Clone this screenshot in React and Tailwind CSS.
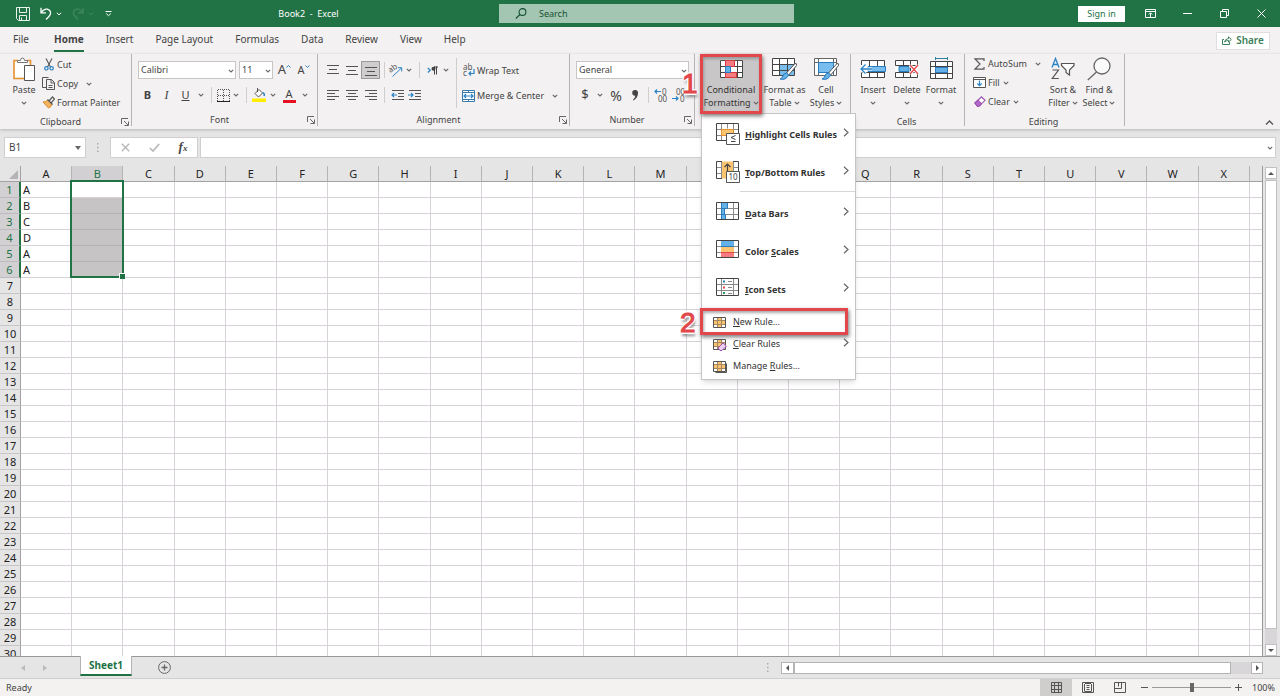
import { Fragment } from "react";

const tabs = ["File", "Home", "Insert", "Page Layout", "Formulas", "Data", "Review", "View", "Help"];
const columns = "ABCDEFGHIJKLMNOPQRSTUVWX".split("");
const rows = Array.from({ length: 30 }, (_, i) => i + 1);
const values = ["A", "B", "C", "D", "A", "A"];

function Chevron({ className = "" }) {
  return (
    <svg className={`h-[4px] w-[6px] shrink-0 text-[#666] ${className}`} viewBox="0 0 6 4" fill="none" stroke="currentColor" strokeWidth="1.1">
      <path d="M.8 .8 3 2.9 5.2 .8" />
    </svg>
  );
}

function ChevronButton({ label }) {
  return (
    <button aria-label={label} className="flex h-[18px] w-[12px] shrink-0 items-center justify-center">
      <Chevron />
    </button>
  );
}

function IconButton({ label, className = "w-[19px]", children }) {
  return (
    <button aria-label={label} className={`flex h-[18px] shrink-0 items-center justify-center ${className}`}>
      {children}
    </button>
  );
}

function Sep() {
  return <span className="mx-1 h-[16px] w-px shrink-0 bg-[#d0cecd]" />;
}

function Group({ label, className, launcher, children }) {
  return (
    <section aria-label={label} className={`flex h-[72px] shrink-0 flex-col border-r border-[#b5b3b4] ${className}`}>
      <div className="flex h-[60px]">{children}</div>
      <div className="mt-[2px] flex h-[12px] items-center pr-[2px]">
        <span className="flex-1 text-center leading-[12px]">{label}</span>
        {launcher && (
          <button aria-label={`${label} settings`}>
            <svg className="h-[8px] w-[8px]" viewBox="0 0 8 8" fill="none" stroke="#666">
              <path d="M.5 6V.5H7M3 3l4 4M7.5 3.5v4h-4" />
            </svg>
          </button>
        )}
      </div>
    </section>
  );
}

function BigButton({ icon, lines, className }) {
  return (
    <button className={`flex h-[60px] shrink-0 flex-col items-center pt-[3px] ${className}`}>
      <span className="mb-[2px] flex h-[24px] items-center justify-center">{icon}</span>
      {lines.map((line, i) => (
        <span key={line} className="flex h-[13px] items-center gap-[2px] whitespace-nowrap leading-[13px]">
          {line}
          {i === 1 && <Chevron />}
        </span>
      ))}
      {lines.length === 1 && (
        <span className="flex h-[13px] items-center">
          <Chevron />
        </span>
      )}
    </button>
  );
}

function SmallButton({ icon, children, chevron, wide }) {
  return (
    <button className="flex h-[19px] items-center whitespace-nowrap">
      <span className="mr-[2px] flex w-[13px] shrink-0 justify-center">{icon}</span>
      {children}
      {chevron && <Chevron className={wide ? "ml-[8px]" : "ml-[3px]"} />}
    </button>
  );
}

function RibbonSelect({ label, value, className }) {
  return (
    <div className={`relative h-[18px] shrink-0 ${className}`}>
      <select aria-label={label} defaultValue={value} className="block h-full w-full appearance-none border border-[#c8c6c4] bg-white pl-[2px] leading-[16px]">
        <option>{value}</option>
      </select>
      <Chevron className="pointer-events-none absolute right-[2px] top-[8px]" />
    </div>
  );
}

function Lines({ d }) {
  return (
    <svg className="h-[12px] w-[12px]" viewBox="0 0 12 12" stroke="#555" shapeRendering="crispEdges">
      <path d={d} />
    </svg>
  );
}

/* 23x18 grid outline shared by the table-like menu icons */
function GridIcon({ children }) {
  return (
    <svg className="h-[19px] w-[23px]" viewBox="0 0 23 19" fill="none">
      <path d="M.5 .5h22v17H.5z" fill="#fff" />
      <path d="M.5 6.5h22M.5 12.5h22M5.5 .5v17M17.5 .5v17" stroke="#8a8a8a" />
      {children}
      <path d="M.5 .5h22v17H.5z" stroke="#444" />
    </svg>
  );
}

function Brush() {
  return (
    <g>
      <path d="M24 6.5 15.5 16l2.3 2 7.7-9.500Q26 6 24 6.5z" fill="#fff" stroke="#555" />
      <path d="M15.5 16q-3 .2-3.600 3-.6 2.400-2.900 3 5.500 1.800 8.800-4z" fill="#64b1e8" stroke="#2b7cbf" />
    </g>
  );
}

function PasteIcon() {
  return (
    <svg className="h-[24px] w-[22px]" viewBox="0 0 22 24" fill="none">
      <path d="M2 4.500h15v16H2z" fill="#fff" />
      <path d="M5 3.500H1v18h10M14 3.500h3.500V9" stroke="#e8912d" strokeWidth="1.600" />
      <path d="M4.500 5.500v-2h3q0-2.500 2-2.500t2 2.500h3v2z" fill="#fff" stroke="#777" />
      <path d="M11.500 8.500h10v15h-10z" fill="#fff" stroke="#555" />
    </svg>
  );
}

function CutIcon() {
  return (
    <svg className="h-[13px] w-[10px]" viewBox="0 0 10 13" fill="none">
      <path d="M2 .5 6.500 9M8 .5 3.500 9" stroke="#555" strokeWidth="1.100" />
      <circle cx="2.400" cy="10.300" r="1.700" stroke="#2b83c6" strokeWidth="1.200" />
      <circle cx="7.600" cy="10.300" r="1.700" stroke="#2b83c6" strokeWidth="1.200" />
    </svg>
  );
}

function CopyIcon() {
  return (
    <svg className="h-[13px] w-[13px]" viewBox="0 0 13 13" fill="none" stroke="#555">
      <path d="M4 10.500H.5V.5h6M4.500 2.500h5l3 3v7h-8zM9 2.500v3.500h3.500M6.500 8.500h4M6.500 10.500h4" />
    </svg>
  );
}

function PainterIcon() {
  return (
    <svg className="h-[13px] w-[13px]" viewBox="0 0 13 13" fill="none">
      <path d="M1 6 6.500 12q3-1 3.500-4L6 4q-2 2-5 2z" fill="#f4b35e" stroke="#dd8a2a" />
      <path d="m5.500 3.500 5 5M7 5l3.500-4 2 2L9 7" fill="#fff" stroke="#555" strokeWidth="1.200" />
    </svg>
  );
}

function ConditionalIcon() {
  return (
    <svg className="h-[19px] w-[23px]" viewBox="0 0 23 19" fill="none">
      <path d="M.5 .5h22v17H.5z" fill="#fff" />
      <path d="M.5 .5h22v17H.5zM.5 6.500h22M.5 12.500h22M5.500 .5v17M17.500 .5v17" stroke="#444" />
      <path d="M5.500 .5h9v6h-9zM5.500 12.500h11v5h-11z" fill="#f47c80" stroke="#d9363b" />
      <path d="M5.500 6.500h5v6h-5z" fill="#64b1e8" stroke="#2b7cbf" />
    </svg>
  );
}

function TableStyleIcon() {
  return (
    <svg className="h-[24px] w-[27px]" viewBox="0 0 27 24" fill="none">
      <path d="M1.500 1.500h22v17h-22z" fill="#fff" />
      <path d="M9 7h14v12H9z" fill="#79bdee" />
      <path d="M1.500 1.500h22v17h-22zM1.500 7.500h22M1.500 13.500h22M8.500 1.500v17M16.500 1.500v17" stroke="#444" />
      <Brush />
    </svg>
  );
}

function CellStyleIcon() {
  return (
    <svg className="h-[24px] w-[27px]" viewBox="0 0 27 24" fill="none">
      <path d="M1.500 1.500h22v17h-22z" fill="#fff" />
      <path d="M1.500 1.500h22v17h-22zM1.500 5.500h22M5.500 1.500v17M20.500 1.500v17" stroke="#666" />
      <path d="M5.500 5.500h15v10h-15z" fill="#79bdee" stroke="#2b7cbf" />
      <Brush />
    </svg>
  );
}

function InsertIcon() {
  return (
    <svg className="h-[19px] w-[26px]" viewBox="0 0 26 19" fill="none">
      <path d="M1.500 .5h23v17h-23z" fill="#fff" />
      <path d="M1.500 5V.5h23V6M1.500 13v4.500h23V12M9.500 .5v17M17.500 .5v17M1.500 12.500h23" stroke="#444" />
      <path d="M8 6.500h17.500v5H8z" fill="#79bdee" stroke="#2b7cbf" />
      <path d="M12 9H1M5.500 4.500 1 9l4.500 4.500" stroke="#fff" strokeWidth="3" />
      <path d="M12 9H1M5.500 4.500 1 9l4.500 4.500" stroke="#2b83c6" strokeWidth="1.300" />
    </svg>
  );
}

function DeleteIcon() {
  return (
    <svg className="h-[19px] w-[24px]" viewBox="0 0 24 19" fill="none">
      <path d="M.5 .5h22v17H.5z" fill="#fff" />
      <path d="M.5 5.500V.5h22v5M.5 12.500v5h22v-4M8.500 .5v17M15.500 .5v17M.5 5.500h22M.5 12.500h22" stroke="#444" />
      <path d="M4 6.500h10v5H4z" fill="#64b1e8" stroke="#2b7cbf" />
      <path d="m15 5 8 9M23 5l-8 9" stroke="#fff" strokeWidth="3" />
      <path d="m15 5 8 9M23 5l-8 9" stroke="#e8474c" strokeWidth="1.300" />
    </svg>
  );
}

function FormatIcon() {
  return (
    <svg className="h-[24px] w-[23px]" viewBox="0 0 23 24" fill="none">
      <path d="M5 1.500h13M5.500 0v3M17.500 0v3" stroke="#2b83a6" />
      <path d="M.5 4.500h22v17H.5z" fill="#fff" />
      <path d="M.5 4.500h22v17H.5zM.5 9.500h22M.5 16.500h22M5.500 4.500v17M17.500 4.500v17" stroke="#444" />
      <path d="M5.500 10.500h12v5h-12z" fill="#64b1e8" stroke="#2b7cbf" />
    </svg>
  );
}

function SortIcon() {
  return (
    <svg className="h-[24px] w-[24px]" viewBox="0 0 24 24" fill="none">
      <path d="M1 10.500 4.500 1.500 8 10.500M2.200 7.500h4.600" stroke="#2b83c6" strokeWidth="1.300" />
      <path d="M1.500 13h6L1.300 21.500h6.500" stroke="#555" strokeWidth="1.200" />
      <path d="M10.500 6.500H23v2L18.500 13v5L15 15.500V13l-4.500-4.500z" fill="#fff" stroke="#555" strokeWidth="1.200" />
    </svg>
  );
}

function FindIcon() {
  return (
    <svg className="h-[24px] w-[24px]" viewBox="0 0 24 24" fill="none" stroke="#666" strokeWidth="1.300">
      <circle cx="15" cy="9" r="8" fill="#fafafa" />
      <path d="M9.500 15 .8 23" />
    </svg>
  );
}

function FillIcon() {
  return (
    <svg className="h-[11px] w-[13px]" viewBox="0 0 13 11" fill="none">
      <path d="M.5 .5h12v10H.5zM.5 2.500h12" fill="#fff" stroke="#555" />
      <path d="M6.500 3.500v5M4.300 6.500l2.200 2.200 2.200-2.200" stroke="#2b83c6" strokeWidth="1.200" />
    </svg>
  );
}

function EraserIcon() {
  return (
    <svg className="h-[11px] w-[12px]" viewBox="0 0 12 11" fill="none" stroke="#9a4fb0" strokeWidth="1.100">
      <path d="M1 7 7.500 .8 11 4.300 5 10.300H3.500z" fill="#fff" />
      <path d="M1 7 4 4.200 7.500 7.700 5 10.300H3.500z" fill="#b56cc9" />
    </svg>
  );
}

function HighlightRulesIcon() {
  return (
    <svg className="h-[23px] w-[24px]" viewBox="0 0 24 23" fill="none">
      <path d="M.5 .5h22v17H.5z" fill="#fff" />
      <path d="M.5 6.500h22M.5 12.500h22M5.500 .5v17M11.500 .5v5M17.500 .5v17" stroke="#8a8a8a" />
      <path d="M.5 .5h22v17H.5z" stroke="#444" />
      <path d="M5.500 6.500h12v6h-12z" fill="#fbc471" stroke="#e8912d" />
      <path d="M10.500 10.500h13v11h-13z" fill="#fff" stroke="#555" />
      <path d="m19.500 12.500-4.500 2 4.500 2M15 18.500h4.500" stroke="#444" />
    </svg>
  );
}

function TopBottomIcon() {
  return (
    <svg className="h-[23px] w-[24px]" viewBox="0 0 24 23" fill="none">
      <path d="M.5 .5h22v17H.5z" fill="#fff" />
      <path d="M6 .5h11v17H6z" fill="#fbc471" />
      <path d="M.5 6.500H6M.5 12.500H6M17 6.500h5.500M5.500 .5v17M17.500 .5v17" stroke="#8a8a8a" />
      <path d="M6 .5H.5v17H6M17 .5h5.500v17" stroke="#444" />
      <path d="M11.500 10V3M8.500 6l3-3 3 3" stroke="#444" strokeWidth="1.200" />
      <path d="M10.500 10.500h13v11h-13z" fill="#fff" stroke="#555" />
      <text x="17" y="19" textAnchor="middle" fontSize="8" fill="#444">10</text>
    </svg>
  );
}

function DataBarsIcon() {
  return (
    <GridIcon>
      <path d="M5.500 .5h6v6h-3v6h1v5h-4z" fill="#64b1e8" stroke="#2b7cbf" />
      <path d="M5.500 6.500h3M5.500 12.500h3" stroke="#2b7cbf" />
    </GridIcon>
  );
}

function ColorScalesIcon() {
  return (
    <GridIcon>
      <path d="M5 1h13v5H5z" fill="#64b1e8" />
      <path d="M5 6h13v6H5z" fill="#fbc471" />
      <path d="M5 12h13v5H5z" fill="#f47c80" />
      <path d="M5 6.500h13" stroke="#2b7cbf" />
      <path d="M5 12.500h13" stroke="#e8474c" />
    </GridIcon>
  );
}

function IconSetsIcon() {
  return (
    <GridIcon>
      <path d="M7 2.500h2v2H7z" fill="#2b83a6" />
      <path d="M7 8.500h2v2H7z" fill="#e8474c" />
      <path d="M7 14h2v2H7z" fill="#2b9a66" />
      <path d="M12 3.500h4M12 9.500h4M12 15.500h4" stroke="#888" />
    </GridIcon>
  );
}

function RuleIcon({ children }) {
  return (
    <svg className="h-[13px] w-[14px]" viewBox="0 0 14 13" fill="none">
      <path d="M.5 1.500h12v10H.5z" fill="#fff" />
      <path d="M1 5h11v3H1zM5 2h3v9H5z" fill="#fbc471" />
      <path d="M.5 4.500h12M.5 8.500h12M4.500 1.500v10M8.500 1.500v10" stroke="#a5875f" />
      <path d="M.5 1.500h12v10H.5z" stroke="#555" />
      {children}
    </svg>
  );
}

const bigRules = [
  { icon: <HighlightRulesIcon />, text: <><u>H</u>ighlight Cells Rules</> },
  { icon: <TopBottomIcon />, text: <><u>T</u>op/Bottom Rules</> },
  { icon: <DataBarsIcon />, text: <><u>D</u>ata Bars</> },
  { icon: <ColorScalesIcon />, text: <>Color <u>S</u>cales</> },
  { icon: <IconSetsIcon />, text: <><u>I</u>con Sets</> },
];

function MenuArrow() {
  return (
    <svg className="mb-1 h-[9px] w-[6px]" viewBox="0 0 6 9" fill="none" stroke="#666" strokeWidth="1.200">
      <path d="m1 .8 4 3.700L1 8.200" />
    </svg>
  );
}

function Callout({ children, className }) {
  return (
    <span
      className={`pointer-events-none absolute font-['Liberation_Sans'] text-[28px] leading-[28px] text-[#e2474b] [-webkit-text-stroke:1px_#e2474b] [text-shadow:2px_0_#fff,-2px_0_#fff,0_2px_#fff,0_-2px_#fff,1px_4px_3px_#777] ${className}`}
    >
      {children}
    </span>
  );
}

function RulesMenu() {
  return (
    <div role="menu" className="absolute left-px top-[59px] z-20 w-[155px] border border-[#c6c4c5] bg-white pb-[2px] pt-px text-[#333] shadow-md">
      {bigRules.map(({ icon, text }, i) => (
        <Fragment key={i}>
          <button role="menuitem" className="flex h-[38px] w-full items-center pl-[14px] pr-[6px]">
            <span className="flex h-[23px] w-[29px] shrink-0">{icon}</span>
            <span className="flex-1 whitespace-nowrap pt-[2px] text-left font-bold">{text}</span>
            <MenuArrow />
          </button>
          {i === 1 && <hr className="mb-[2px] ml-[38px] border-[#d8d6d7]" />}
        </Fragment>
      ))}
      <div className="mt-[3px]">
        <button role="menuitem" className="relative flex h-[22px] w-full items-center pl-[11px]">
          <span className="w-[20px]"><RuleIcon /></span>
          <span><u>N</u>ew Rule...</span>
          <span className="pointer-events-none absolute -left-[2px] -top-[3px] h-[27px] w-[148px] border-[3px] border-[#e2474b] shadow-[1px_2px_4px_#777,inset_1px_2px_3px_#aaa]" />
          <Callout className="-left-[22px] -top-[2px]">2</Callout>
        </button>
        <button role="menuitem" className="flex h-[22px] w-full items-center pl-[11px] pr-[6px]">
          <span className="w-[20px]">
            <RuleIcon>
              <path d="m5 10 5-5 3.500 3L9 12.500H7z" fill="#ecd0f4" stroke="#9a4fb0" />
            </RuleIcon>
          </span>
          <span className="flex-1 text-left"><u>C</u>lear Rules</span>
          <MenuArrow />
        </button>
        <button role="menuitem" className="flex h-[22px] w-full items-center pl-[11px]">
          <span className="w-[20px]">
            <RuleIcon>
              <path d="M2.500 12.500h11v-9" stroke="#555" />
            </RuleIcon>
          </span>
          <span>Manage <u>R</u>ules...</span>
        </button>
      </div>
    </div>
  );
}

function TitleBar() {
  return (
    <header className="grid h-[27px] shrink-0 grid-cols-[499fr_295fr_486fr] items-center bg-[#217346] text-[9px] text-white">
      <div className="flex items-center">
        <div className="flex w-[118px] items-center pl-[16px]">
          <button aria-label="Save">
            <svg className="h-[14px] w-[14px]" viewBox="0 0 14 14" fill="none" stroke="#e8f3ec">
              <path d="M.5 .5h13v13H2.500l-2-2zM3.500 .5v5h7v-5M3.500 13.500v-5h7v5M5.500 13v-2.500" />
            </svg>
          </button>
          <button aria-label="Undo" className="ml-[10px]">
            <svg className="h-[13px] w-[12px]" viewBox="0 0 12 13" fill="none" stroke="#fff" strokeWidth="1.300">
              <path d="M1 .8v5h5M1.200 5.500Q4 1.500 7.500 2.200 11 3.500 10.500 7 9.500 9.500 6 12.500" />
            </svg>
          </button>
          <svg className="ml-1 h-[4px] w-[6px]" viewBox="0 0 6 4" fill="none" stroke="#fff"><path d="M.8 .8 3 2.9 5.2 .8" /></svg>
          <button aria-label="Redo" className="ml-[10px]">
            <svg className="h-[13px] w-[12px]" viewBox="0 0 12 13" fill="none" stroke="#41875f" strokeWidth="1.300">
              <path d="M11 .8v5H6M10.800 5.500Q8 1.500 4.500 2.200 1 3.500 1.500 7 2.500 9.500 6 12.500" />
            </svg>
          </button>
          <svg className="ml-1 h-[4px] w-[6px]" viewBox="0 0 6 4" fill="none" stroke="#41875f"><path d="M.8 .8 3 2.9 5.2 .8" /></svg>
          <button aria-label="Customize toolbar" className="ml-[11px] shrink-0">
            <svg className="h-[6px] w-[7px]" viewBox="0 0 7 6" fill="none" stroke="#fff">
              <path d="M.5 .5h6M1.200 2.500 3.500 4.700 5.800 2.500" />
            </svg>
          </button>
        </div>
        <h1 className="flex-1 whitespace-pre text-center">Book2  -  Excel</h1>
      </div>
      <label className="flex h-[19px] items-center bg-[#a3c6b2] pl-[16px]">
        <svg className="h-[11px] w-[12px]" viewBox="0 0 12 11" fill="none" stroke="#164f30" strokeWidth="1.100">
          <circle cx="7.500" cy="4" r="3.400" />
          <path d="M5 6.500.8 10.500" />
        </svg>
        <input aria-label="Search" placeholder="Search" className="ml-[12px] w-[200px] bg-transparent text-[#164f30] placeholder:text-[#164f30]" />
      </label>
      <div className="flex items-center justify-end pr-[14px]">
        <button className="h-[16px] w-[47px] bg-white leading-[16px] text-[#217346]">Sign in</button>
        <button aria-label="Ribbon display options" className="ml-[20px]">
          <svg className="h-[9px] w-[11px]" viewBox="0 0 11 9" fill="none" stroke="#fff">
            <path d="M.5 .5h10v8H.5zM.5 2.500h10M5.500 8V4M3.800 5.500l1.700-1.700 1.700 1.700" />
          </svg>
        </button>
        <button aria-label="Minimize" className="ml-[27px]">
          <svg className="h-[9px] w-[9px]" viewBox="0 0 9 9" stroke="#fff"><path d="M0 4.500h9" /></svg>
        </button>
        <button aria-label="Restore" className="ml-[28px]">
          <svg className="h-[9px] w-[9px]" viewBox="0 0 9 9" fill="none" stroke="#fff">
            <path d="M.5 2.500h6v6h-6zM2.500 2.500v-2h6v6h-2" />
          </svg>
        </button>
        <button aria-label="Close" className="ml-[28px]">
          <svg className="h-[9px] w-[9px]" viewBox="0 0 9 9" stroke="#fff"><path d="m.5 .5 8 8M8.500 .5l-8 8" /></svg>
        </button>
      </div>
    </header>
  );
}

function Tabs() {
  return (
    <nav className="flex h-[27px] shrink-0 items-center bg-[#f3f1f2] pl-[13px] text-[10px]">
      {tabs.map((tab) => (
        <a key={tab} href="#" className={tab === "Home" ? "ml-[14px] mr-[11px] h-[22px] border-b-2 border-[#217346] pt-[2px] font-bold text-[#444]" : "mx-[11px] h-[22px] whitespace-nowrap pt-[2px] text-[#444] first:ml-0"}>
          {tab}
        </a>
      ))}
      <button className="ml-auto mr-[10px] flex h-[18px] w-[54px] items-center justify-center gap-[4px] border border-[#e1dfdd] bg-white font-semibold text-[#3b7f5a]">
        <svg className="h-[9px] w-[10px]" viewBox="0 0 10 9" fill="none" stroke="#3b7f5a">
          <path d="M2 3.500H.5v5h7V6M2.500 6q.5-3 4-3.500V.8L9.300 3.500 6.500 6V4.500Q4 4.500 2.500 6z" />
        </svg>
        Share
      </button>
    </nav>
  );
}

function Ribbon() {
  return (
    <div className="relative z-10 flex h-[75px] shrink-0 bg-[#f3f1f2] text-[9px] shadow-[0_1px_3px_#b8b6b7]">
      <Group label="Clipboard" className="w-[132px]" launcher>
        <BigButton icon={<PasteIcon />} lines={["Paste"]} className="ml-[6px] w-[36px]" />
        <div className="pt-px">
          <SmallButton icon={<CutIcon />}>Cut</SmallButton>
          <SmallButton icon={<CopyIcon />} chevron wide>Copy</SmallButton>
          <SmallButton icon={<PainterIcon />}>Format Painter</SmallButton>
        </div>
      </Group>

      <Group label="Font" className="w-[186px]" launcher>
        <div className="flex flex-col gap-[7px] pl-[6px] pt-[7px]">
          <div className="flex">
            <RibbonSelect label="Font" value="Calibri" className="w-[98px]" />
            <RibbonSelect label="Font size" value="11" className="ml-[3px] w-[34px]" />
            <IconButton label="Increase font size" className="ml-[2px] w-[19px]">
              <span className="text-[13px]">A</span>
              <svg className="mb-2 h-[3px] w-[5px]" viewBox="0 0 5 3" fill="none" stroke="#2b83c6"><path d="M.5 2.500 2.500 .5l2 2" /></svg>
            </IconButton>
            <IconButton label="Decrease font size">
              <span className="text-[11px]">A</span>
              <svg className="mb-2 h-[3px] w-[5px]" viewBox="0 0 5 3" fill="none" stroke="#2b83c6"><path d="M.5 .5l2 2 2-2" /></svg>
            </IconButton>
          </div>
          <div className="flex items-center">
            <IconButton label="Bold"><b className="text-[11px]">B</b></IconButton>
            <IconButton label="Italic"><i className="font-['Liberation_Serif'] text-[12px]">I</i></IconButton>
            <IconButton label="Underline"><u className="text-[11px]">U</u></IconButton>
            <ChevronButton label="Underline styles" />
            <Sep />
            <IconButton label="Borders" className="w-[14px]">
              <svg className="h-[13px] w-[13px]" viewBox="0 0 13 13" fill="none" stroke="#555" shapeRendering="crispEdges">
                <path d="M.5 12V.5h12V12M6.500 .5v12M.5 6.500h12" strokeDasharray="1 1" />
                <path d="M0 12.500h13" stroke="#222" />
              </svg>
            </IconButton>
            <ChevronButton label="More borders" />
            <Sep />
            <IconButton label="Fill color" className="w-[16px]">
              <svg className="h-[14px] w-[14px]" viewBox="0 0 14 14" fill="none">
                <path d="M0 10.500h14V14H0z" fill="#ffee00" />
                <path d="M3 5.500 7 1.500l3.500 3.500L6.500 9z" fill="#fff" stroke="#555" />
                <path d="M5.500 0v4" stroke="#555" />
                <path d="M11 4.500q2 1.500 1 3.500" stroke="#2b83c6" strokeWidth="1.500" />
              </svg>
            </IconButton>
            <ChevronButton label="More fill colors" />
            <IconButton label="Font color" className="w-[20px]">
              <span className="h-[15px] w-[13px] border-b-[3px] border-[#e81123] text-[11px] leading-[12px]">A</span>
            </IconButton>
            <ChevronButton label="More font colors" />
          </div>
        </div>
      </Group>

      <Group label="Alignment" className="w-[252px]" launcher>
        <div className="flex w-[138px] shrink-0 flex-col gap-[7px] pl-[5px] pt-[7px]">
          <div className="flex items-center">
            <IconButton label="Top align"><Lines d="M0 1.500h12M2 5.500h8M0 9.500h12" /></IconButton>
            <IconButton label="Middle align"><Lines d="M0 2.500h12M2 6.500h8M0 10.500h12" /></IconButton>
            <IconButton label="Bottom align" className="w-[19px] border border-[#9c9a9b] bg-[#cfcdce]"><Lines d="M0 3.500h12M2 7.500h8M0 11.500h12" /></IconButton>
            <Sep />
            <IconButton label="Orientation" className="w-[14px]">
              <svg className="h-[13px] w-[14px] overflow-visible" viewBox="0 0 14 13" fill="none">
                <text x="0" y="7" fontSize="8" fill="#555" transform="rotate(-35 4 6)">ab</text>
                <path d="M3.500 12.500 12.500 4M9 3.700h3.700v3.800" stroke="#2b83c6" />
              </svg>
            </IconButton>
            <ChevronButton label="More orientations" />
            <Sep />
            <IconButton label="Text direction" className="w-[16px]">
              <svg className="h-[9px] w-[11px]" viewBox="0 0 11 9" fill="none">
                <path d="M.8 2 3.300 4.300.8 6.500" stroke="#2b83c6" strokeWidth="1.200" />
                <path d="M7 1h4M7.500 .5v8M9.500 .5v8" stroke="#444" />
                <circle cx="6.500" cy="2.800" r="2" fill="#444" />
              </svg>
            </IconButton>
            <ChevronButton label="More text directions" />
          </div>
          <div className="flex items-center">
            <IconButton label="Align left"><Lines d="M0 1.500h12M0 4.500h8M0 7.500h12M0 10.500h8" /></IconButton>
            <IconButton label="Center"><Lines d="M0 1.500h12M2 4.500h8M0 7.500h12M2 10.500h8" /></IconButton>
            <IconButton label="Align right"><Lines d="M0 1.500h12M4 4.500h8M0 7.500h12M4 10.500h8" /></IconButton>
            <Sep />
            <IconButton label="Decrease indent" className="w-[16px]">
              <svg className="h-[12px] w-[13px]" viewBox="0 0 13 12" fill="none" stroke="#555">
                <path d="M1 1.500h12M7 4.500h6M7 7.500h6M1 10.500h12" />
                <path d="M6 6H1M3 4 1 6l2 2" stroke="#2b83c6" strokeWidth="1.200" />
              </svg>
            </IconButton>
            <IconButton label="Increase indent">
              <svg className="h-[12px] w-[13px]" viewBox="0 0 13 12" fill="none" stroke="#555">
                <path d="M1 1.500h12M7 4.500h6M7 7.500h6M1 10.500h12" />
                <path d="M0 6h5M3 4l2 2-2 2" stroke="#2b83c6" strokeWidth="1.200" />
              </svg>
            </IconButton>
          </div>
        </div>
        <span className="mt-1 h-[50px] w-px shrink-0 bg-[#d0cecd]" />
        <div className="flex flex-1 flex-col gap-[6px] pl-[5px] pt-[7px]">
          <SmallButton
            icon={
              <svg className="h-[13px] w-[12px] overflow-visible" viewBox="0 0 12 13" fill="none">
                <text x="0" y="6" fontSize="8" fill="#555">ab</text>
                <text x="0" y="12" fontSize="8" fill="#555">c</text>
                <path d="M11 5v4.500H6M8 7.500l-2 2 2 2" stroke="#2b83c6" strokeWidth="1.200" />
              </svg>
            }
          >
            Wrap Text
          </SmallButton>
          <SmallButton
            chevron
            wide
            icon={
              <svg className="h-[12px] w-[13px]" viewBox="0 0 13 12" fill="none">
                <path d="M.5 .5h12v11H.5zM.5 2.500h12M.5 9.500h12" fill="#fff" stroke="#3c7ba8" />
                <path d="M2 6h9M4 4 2 6l2 2M9 4l2 2-2 2" stroke="#2b83c6" strokeWidth="1.200" />
                <path d="M6.500 .5v2M6.500 9.500v2" stroke="#3c7ba8" />
              </svg>
            }
          >
            Merge &amp; Center
          </SmallButton>
        </div>
      </Group>

      <Group label="Number" className="w-[125px]" launcher>
        <div className="flex flex-col gap-[7px] pl-[6px] pt-[7px]">
          <RibbonSelect label="Number format" value="General" className="w-[113px]" />
          <div className="flex items-center">
            <IconButton label="Currency" className="w-[18px] text-[13px]">$</IconButton>
            <ChevronButton label="More currencies" />
            <IconButton label="Percent" className="w-[20px] text-[14px]">%</IconButton>
            <IconButton label="Comma style" className="w-[18px]">
              <svg className="h-[11px] w-[6px]" viewBox="0 0 6 11" fill="#444"><path d="M3 0a2.800 2.800 0 0 1 3 3q0 5-4.500 7.500L1 9.800Q3 8.500 3.300 5.800A2.900 2.900 0 1 1 3 0z" /></svg>
            </IconButton>
            <Sep />
            <IconButton label="Increase decimal" className="w-[16px]">
              <svg className="h-[14px] w-[14px] overflow-visible" viewBox="0 0 14 14" fill="none">
                <text x="8" y="6.500" fontSize="8" fill="#555">0</text>
                <text x="4" y="13.500" fontSize="8" fill="#555">00</text>
                <path d="M7 3.500H1M3 1.500l-2 2 2 2" stroke="#2b83c6" strokeWidth="1.200" />
              </svg>
            </IconButton>
            <IconButton label="Decrease decimal" className="w-[20px]">
              <svg className="h-[14px] w-[14px] overflow-visible" viewBox="0 0 14 14" fill="none">
                <text x="4" y="6.500" fontSize="8" fill="#555">00</text>
                <text x="8" y="13.500" fontSize="8" fill="#555">0</text>
                <path d="M0 10.500h6M4 8.500l2 2-2 2" stroke="#2b83c6" strokeWidth="1.200" />
              </svg>
            </IconButton>
          </div>
        </div>
      </Group>

      <Group label="Styles" className="w-[156px]">
        <div className="relative ml-[5px]">
          <BigButton icon={<ConditionalIcon />} lines={["Conditional", "Formatting"]} className="w-[62px] bg-[#c8c6c7] text-[#333]" />
          <span className="pointer-events-none absolute inset-0 z-30 border-[3px] border-[#e2474b] shadow-[1px_2px_4px_#777,inset_1px_2px_3px_#999]" />
          <Callout className="-left-[18px] top-[16px]">1</Callout>
          <RulesMenu />
        </div>
        <BigButton icon={<TableStyleIcon />} lines={["Format as", "Table"]} className="w-[45px]" />
        <BigButton icon={<CellStyleIcon />} lines={["Cell", "Styles"]} className="w-[38px]" />
      </Group>

      <Group label="Cells" className="w-[114px]">
        <BigButton icon={<InsertIcon />} lines={["Insert"]} className="ml-[5px] w-[34px]" />
        <BigButton icon={<DeleteIcon />} lines={["Delete"]} className="w-[34px]" />
        <BigButton icon={<FormatIcon />} lines={["Format"]} className="w-[34px]" />
      </Group>

      <Group label="Editing" className="w-[160px]">
        <div className="w-[80px] pl-[8px]">
          <SmallButton
            chevron
            wide
            icon={<svg className="h-[12px] w-[11px]" viewBox="0 0 11 12" fill="none" stroke="#555" strokeWidth="1.200"><path d="M10 3V.8H1L6 6l-5 5.200h9V9" /></svg>}
          >
            AutoSum
          </SmallButton>
          <SmallButton icon={<FillIcon />} chevron>Fill</SmallButton>
          <SmallButton icon={<EraserIcon />} chevron>Clear</SmallButton>
        </div>
        <BigButton icon={<SortIcon />} lines={["Sort &", "Filter"]} className="w-[36px]" />
        <BigButton icon={<FindIcon />} lines={["Find &", "Select"]} className="w-[36px]" />
      </Group>

      <button aria-label="Collapse ribbon" className="mb-[4px] ml-auto mr-[6px] self-end">
        <svg className="h-[5px] w-[9px]" viewBox="0 0 9 5" fill="none" stroke="#555" strokeWidth="1.300"><path d="M1 4.500 4.500 1 8 4.500" /></svg>
      </button>
    </div>
  );
}

function FormulaBar() {
  return (
    <div className="flex h-[37px] shrink-0 bg-[#e6e5e6] px-[4px] pt-[8px] text-[10px]">
      <div className="flex h-[21px] w-[82px] items-center border border-[#d0ced0] bg-white pr-[4px]">
        <input aria-label="Name box" defaultValue="B1" className="min-w-0 flex-1 bg-transparent pl-[4px]" />
        <svg className="h-[4px] w-[6px]" viewBox="0 0 6 4" fill="#666"><path d="M0 0h6L3 4z" /></svg>
      </div>
      <svg className="mx-[10px] mt-[6px] h-[9px] w-[4px]" viewBox="0 0 4 9" fill="#aaa"><path d="M1 0h1.500v1.500H1zM1 3.700h1.500v1.500H1zM1 7.400h1.500v1.500H1z" /></svg>
      <div className="flex h-[21px] w-[88px] items-center justify-around border border-[#d0ced0] bg-white">
        <button aria-label="Cancel">
          <svg className="h-[9px] w-[9px]" viewBox="0 0 9 9" stroke="#b5b5b5" strokeWidth="1.300"><path d="m.8 .8 7.400 7.400M8.200 .8.8 8.200" /></svg>
        </button>
        <button aria-label="Enter">
          <svg className="h-[9px] w-[11px]" viewBox="0 0 11 9" fill="none" stroke="#b5b5b5" strokeWidth="1.600"><path d="M.8 5 4 8 10.200 1" /></svg>
        </button>
        <button aria-label="Insert function" className="font-['Liberation_Serif'] text-[13px] font-bold italic leading-[14px]">
          f<span className="text-[9px]">x</span>
        </button>
      </div>
      <div className="ml-[2px] flex h-[21px] flex-1 items-center border border-[#d0ced0] bg-white pr-[2px]">
        <input aria-label="Formula" className="min-w-0 flex-1 bg-transparent px-1" />
        <Chevron />
      </div>
    </div>
  );
}

function Sheet() {
  return (
    <main className="flex min-h-0 flex-1 bg-[#e6e5e6]">
      <div className="min-w-0 flex-1 overflow-hidden border-r border-[#999] bg-white">
        <table className="w-full table-fixed border-separate border-spacing-0 text-[11px] text-[#222]">
          <thead>
            <tr className="h-[16px] bg-[#e6e5e6] leading-[15px]">
              <th className="w-[21px] border-b border-r border-[#a3a1a3] p-0">
                <svg className="ml-auto mr-[2px] mt-px h-[9px] w-[9px]" viewBox="0 0 9 9" fill="#b5b3b5"><path d="M9 0v9H0z" /></svg>
              </th>
              {columns.map((col) => (
                <th
                  key={col}
                  scope="col"
                  className={
                    col === "B"
                      ? "border-b border-r border-b-[#217346] border-r-[#b5b3b5] bg-[#d2d0d2] p-0 font-normal text-[#217346]"
                      : "border-b border-r border-b-[#a3a1a3] border-r-[#b5b3b5] p-0 font-normal"
                  }
                >
                  {col}
                </th>
              ))}
              <th className="w-[12px] border-b border-[#a3a1a3] p-0" />
            </tr>
          </thead>
          <tbody>
            {rows.map((row) => (
              <tr key={row} className="h-[16px] leading-[15px]">
                <th
                  scope="row"
                  className={
                    row <= 6
                      ? "border-b border-r-2 border-b-[#bdbbbd] border-r-[#217346] bg-[#d2d0d2] p-0 font-normal text-[#217346]"
                      : "border-b border-r border-b-[#c8c6c8] border-r-[#a3a1a3] bg-[#e6e5e6] p-0 font-normal"
                  }
                >
                  {row}
                </th>
                {columns.map((col) => (
                  <td
                    key={col}
                    className={
                      col === "B" && row > 1 && row <= 6
                        ? "border-b border-r border-[#b3b1b3] bg-[#c6c4c5] p-0"
                        : "relative border-b border-r border-[#d6d2d7] p-0 pl-[2px]"
                    }
                  >
                    {col === "A" && values[row - 1]}
                    {col === "B" && row === 1 && (
                      <span className="absolute -left-[2px] -top-[2px] z-[1] box-content h-[94px] w-full border-2 border-[#217346]">
                        <span className="absolute -bottom-[3px] -right-[3px] h-[6px] w-[6px] border-l border-t border-white bg-[#217346]" />
                      </span>
                    )}
                  </td>
                ))}
                <td className="border-b border-[#d6d2d7] p-0" />
              </tr>
            ))}
          </tbody>
        </table>
      </div>
      <div className="flex w-[17px] shrink-0 flex-col items-center pr-px pt-px">
        <button aria-label="Scroll up" className="flex h-[12px] w-[12px] shrink-0 items-center justify-center border border-[#c2c0c2] bg-white">
          <svg className="h-[3px] w-[6px]" viewBox="0 0 6 3" fill="#555"><path d="M0 3h6L3 0z" /></svg>
        </button>
        <div className="flex w-[12px] flex-1 flex-col bg-[#d8d6d8]">
          <span className="mt-px h-[449px] border border-[#c2c0c2] bg-white" />
        </div>
        <button aria-label="Scroll down" className="flex h-[12px] w-[12px] shrink-0 items-center justify-center border border-[#c2c0c2] bg-white">
          <svg className="h-[3px] w-[6px]" viewBox="0 0 6 3" fill="#555"><path d="M0 0h6L3 3z" /></svg>
        </button>
      </div>
    </main>
  );
}

function SheetTabs() {
  return (
    <div className="flex h-[22px] shrink-0 items-center border-t border-[#999] bg-[#e6e5e6]">
      <div className="flex w-[80px] gap-[18px] pl-[21px]">
        <svg className="h-[6px] w-[4px]" viewBox="0 0 4 6" fill="#bbb"><path d="M4 0v6L0 3z" /></svg>
        <svg className="h-[6px] w-[4px]" viewBox="0 0 4 6" fill="#bbb"><path d="M0 0v6l4-3z" /></svg>
      </div>
      <button className="-mt-px h-[20px] w-[52px] self-start border-x border-b-2 border-x-[#b5b3b5] border-b-[#217346] bg-white text-[10px] font-bold leading-[18px] text-[#217346]">
        Sheet1
      </button>
      <button aria-label="New sheet" className="ml-[26px]">
        <svg className="h-[13px] w-[13px]" viewBox="0 0 13 13" fill="none" stroke="#666">
          <circle cx="6.500" cy="6.500" r="5.900" />
          <path d="M3.500 6.500h6M6.500 3.500v6" strokeWidth="1.300" />
        </svg>
      </button>
      <svg className="ml-auto h-[9px] w-[3px]" viewBox="0 0 3 9" fill="#aaa"><path d="M0 0h1.500v1.500H0zM0 3.700h1.500v1.500H0zM0 7.400h1.500v1.500H0z" /></svg>
      <div className="ml-[11px] mr-[17px] flex h-[12px] w-[482px] bg-[#d8d6d8]">
        <button aria-label="Scroll left" className="flex w-[13px] items-center justify-center border border-[#b5b3b5] bg-white">
          <svg className="h-[6px] w-[3px]" viewBox="0 0 3 6" fill="#555"><path d="M3 0v6L0 3z" /></svg>
        </button>
        <span className="flex-1 border border-[#b5b3b5] bg-white" />
        <button aria-label="Scroll right" className="ml-[20px] flex w-[12px] items-center justify-center border border-[#b5b3b5] bg-white">
          <svg className="h-[6px] w-[3px]" viewBox="0 0 3 6" fill="#555"><path d="M0 0v6l3-3z" /></svg>
        </button>
      </div>
    </div>
  );
}

function StatusBar() {
  return (
    <footer className="flex h-[18px] shrink-0 items-center border-t border-[#d0ced0] bg-[#f3f2f0] px-[6px] text-[9px]">
      <span className="flex-1">Ready</span>
      <button aria-label="Normal view" className="flex h-full w-[32px] items-center justify-center bg-[#cfcecc]">
        <svg className="h-[11px] w-[11px]" viewBox="0 0 11 11" fill="none" stroke="#555"><path d="M.5 .5h10v10H.5zM.5 3.500h10M.5 7.500h10M3.500 .5v10M7.500 .5v10" /></svg>
      </button>
      <button aria-label="Page layout view" className="flex w-[32px] justify-center">
        <svg className="h-[11px] w-[12px]" viewBox="0 0 12 11" fill="none" stroke="#555"><path d="M.5 .5h11v10H.5zM2.500 2v7.500M9.500 2v7.500M3 1.500h6M3 9.500h6M4.500 3.500h3M4.500 5.500h3M4.500 7.500h3" /></svg>
      </button>
      <button aria-label="Page break preview" className="flex w-[32px] justify-center">
        <svg className="h-[11px] w-[12px]" viewBox="0 0 12 11" fill="none" stroke="#555"><path d="M.5 .5h11v10H.5zM.5 6.500h7v-6M4.500 .5v4" /></svg>
      </button>
      <button aria-label="Zoom out" className="ml-[5px]">
        <svg className="h-[7px] w-[7px]" viewBox="0 0 7 7" stroke="#555"><path d="M0 3.500h7" /></svg>
      </button>
      <input
        type="range"
        aria-label="Zoom"
        min="10"
        max="190"
        defaultValue="100"
        className="mx-[4px] h-px w-[79px] appearance-none bg-[#999] [&::-webkit-slider-thumb]:h-[9px] [&::-webkit-slider-thumb]:w-[4px] [&::-webkit-slider-thumb]:appearance-none [&::-webkit-slider-thumb]:bg-[#666]"
      />
      <button aria-label="Zoom in">
        <svg className="h-[7px] w-[7px]" viewBox="0 0 7 7" stroke="#555"><path d="M0 3.500h7M3.500 0v7" /></svg>
      </button>
      <span className="ml-[10px] w-[22px]">100%</span>
    </footer>
  );
}

export default function App() {
  return (
    <div className="flex h-screen w-full flex-col overflow-hidden bg-[#f3f1f2] font-['Noto_Sans',sans-serif] text-[#444]">
      <TitleBar />
      <Tabs />
      <Ribbon />
      <FormulaBar />
      <Sheet />
      <SheetTabs />
      <StatusBar />
    </div>
  );
}
